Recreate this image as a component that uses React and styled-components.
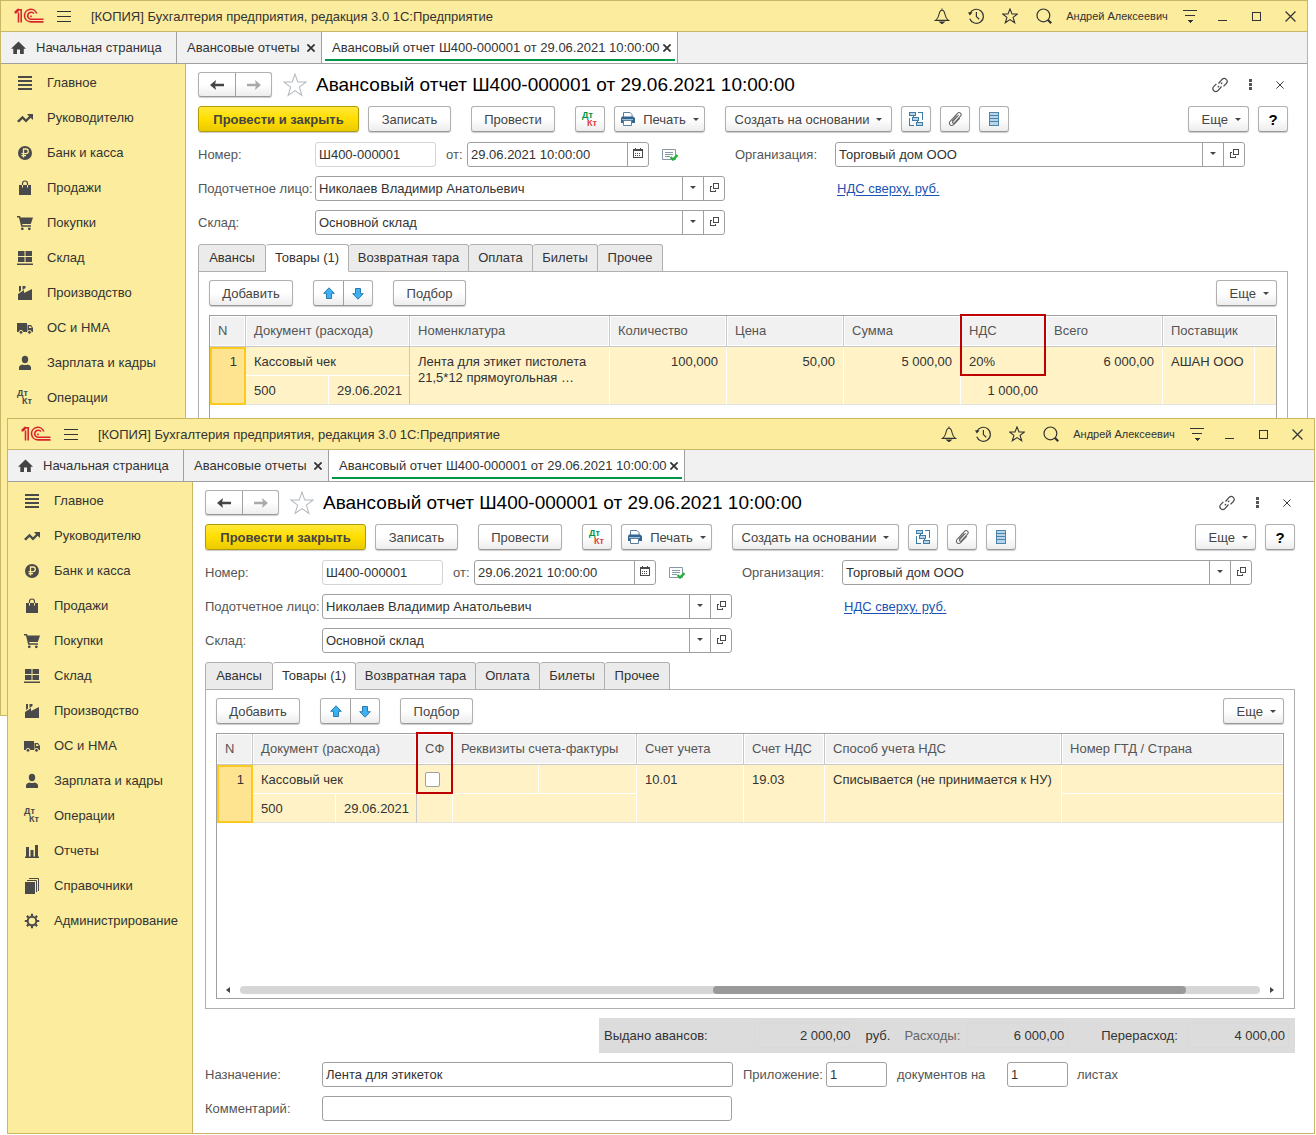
import { useId } from "react";
import styled, { createGlobalStyle, css } from "styled-components";

const GlobalStyle = createGlobalStyle`
  * {
    box-sizing: border-box;
  }

  body {
    margin: 0;
    background: #ffffff;
    font-family: "Liberation Sans", Arial, sans-serif;
    font-size: 13px;
    color: #333333;
  }

  button,
  input,
  select {
    font: inherit;
    color: inherit;
    margin: 0;
  }
`;

const Desktop = styled.main`
  position: relative;
  padding: 418px 1px 1px 7px;
`;

/* ---------- window frame ---------- */

const WindowFrame = styled.section`
  display: flex;
  flex-direction: column;
  min-height: 716px;
  background: #ffffff;
  border: 1px solid #c9b763;

  ${(p) =>
    p.$behind
      ? css`
          position: absolute;
          top: 0;
          left: 0;
          right: 8px;
        `
      : css`
          position: relative;
          z-index: 1;
        `}
`;

const TitleBar = styled.header`
  display: flex;
  align-items: center;
  height: 31px;
  padding-left: 13px;
  background: #fbec9e;
  border-bottom: 1px solid #c9b763;
`;

const AppTitle = styled.div`
  flex: 1;
  padding-left: 7px;
  white-space: nowrap;
`;

const BarButton = styled.button`
  display: flex;
  align-items: center;
  justify-content: center;
  width: ${(p) => p.$width || 34}px;
  height: 30px;
  padding: 0;
  border: 0;
  background: none;
`;

const UserName = styled.div`
  width: 112px;
  font-size: 11px;
  text-align: center;
  white-space: nowrap;
`;

const PageTabs = styled.nav`
  display: flex;
  height: 32px;
  background: #f1f1f1;
  border-bottom: 1px solid #a0a0a0;
`;

const PageTab = styled.div`
  display: flex;
  align-items: center;
  justify-content: space-between;
  width: ${(p) => p.$width}px;
  padding: 0 6px 0 10px;
  border-right: 1px solid #a0a0a0;
  white-space: nowrap;
  position: relative;
  background: ${(p) => (p.$active ? "#ffffff" : "transparent")};

  ${(p) =>
    p.$active &&
    css`
      &::after {
        content: "";
        position: absolute;
        left: 3px;
        right: 2px;
        bottom: 2px;
        height: 2px;
        background: #009646;
      }
    `}
`;

const HomeTab = styled(PageTab)`
  justify-content: flex-start;
  gap: 10px;
`;

const CloseTab = styled.button`
  display: flex;
  padding: 0;
  border: 0;
  background: none;
`;

const Body = styled.div`
  display: flex;
  flex: 1;
`;

const Sidebar = styled.nav`
  flex: none;
  width: 185px;
  padding-top: 1px;
  background: #fbec9e;
  border-right: 1px solid #c9b763;
`;

const MenuItem = styled.a`
  display: flex;
  align-items: center;
  gap: 13px;
  height: 35px;
  padding-left: 15px;
  color: #333333;
  text-decoration: none;
  white-space: nowrap;
`;

const Content = styled.div`
  display: flex;
  flex-direction: column;
  flex: 1;
  min-width: 0;
  padding: 8px 19px 12px 12px;
`;

/* ---------- document header ---------- */

const DocHeader = styled.div`
  display: flex;
  align-items: center;
  height: 25px;
`;

const ButtonPair = styled.div`
  display: flex;
  height: ${(p) => p.$height}px;
  border: 1px solid #b0b0b0;
  border-bottom-color: #989898;
  border-radius: 3px;
  box-shadow: 0 1px 1px #cccccc;
  background: linear-gradient(#ffffff 50%, #ededed);
`;

const PairButton = styled.button`
  display: flex;
  align-items: center;
  justify-content: center;
  width: ${(p) => p.$width}px;
  padding: 0;
  border: 0;
  background: none;

  & + & {
    border-left: 1px solid ${(p) => p.$divider || "#d4d4d4"};
  }
`;

const DocTitle = styled.h1`
  flex: 1;
  margin: 0;
  font-size: 19px;
  font-weight: 400;
  line-height: 24px;
  color: #000000;
  white-space: nowrap;
`;

const StarButton = styled(BarButton)`
  height: 24px;
  margin: 0 9px 0 10px;
`;

const HeaderTools = styled.div`
  display: flex;
  margin-right: -7px;
`;

/* ---------- commands ---------- */

const CommandBar = styled.div`
  display: flex;
  justify-content: space-between;
  margin-top: ${(p) => p.$top}px;
`;

const CommandGroup = styled.div`
  display: flex;
  gap: ${(p) => p.$gap}px;
`;

const Button = styled.button`
  display: flex;
  align-items: center;
  justify-content: center;
  gap: 7px;
  width: ${(p) => p.$width}px;
  height: 26px;
  padding: 0;
  border: 1px solid #b0b0b0;
  border-bottom-color: #989898;
  border-radius: 3px;
  box-shadow: 0 1px 1px #cccccc;
  background: linear-gradient(#ffffff 50%, #ededed);
  color: #444444;
  white-space: nowrap;
`;

const PrimaryButton = styled(Button)`
  border-color: #b19a0a;
  background: linear-gradient(#ffe838, #ffde00 50%, #ebca00);
  font-weight: 700;
`;

const MoreButton = styled(Button)`
  justify-content: flex-end;
  padding-right: 7px;
`;

const HelpButton = styled(Button)`
  color: #000000;
  font-size: 15px;
  font-weight: 700;
`;

/* ---------- form ---------- */

const Fields = styled.div`
  display: flex;
  flex-direction: column;
  gap: 9px;
  margin-top: ${(p) => p.$top}px;
`;

const FormRow = styled.div`
  display: flex;
  align-items: center;
  height: 25px;
`;

const Label = styled.label`
  flex: none;
  width: ${(p) => (p.$width ? `${p.$width}px` : "auto")};
  color: #555555;
  white-space: nowrap;
`;

const FieldBox = styled.div`
  position: relative;
  display: flex;
  flex: 0 1 ${(p) => p.$width}px;
  height: 25px;
  border: 1px solid ${(p) => (p.$readonly ? "#d4d4d4" : "#a0a0a0")};
  border-radius: 3px;
  overflow: hidden;
  background: #ffffff;

  input,
  select {
    flex: 1;
    width: 100%;
    min-width: 0;
    padding: 0 3px;
    border: 0;
    outline: 0;
    background: none;
    appearance: none;
  }
`;

const Caret = styled.span`
  position: absolute;
  top: 0;
  bottom: 0;
  right: 21px;
  display: flex;
  align-items: center;
  justify-content: center;
  width: 21px;
  padding-bottom: 2px;
  border-left: 1px solid #a0a0a0;
  pointer-events: none;
`;

const FieldButton = styled.button`
  display: flex;
  align-items: center;
  justify-content: center;
  flex: none;
  width: 21px;
  padding: 0 0 2px;
  border: 0;
  border-left: 1px solid #a0a0a0;
  background: none;
`;

const Spacer = styled.span`
  flex: none;
  width: ${(p) => p.$width}px;
`;

const TaxLink = styled.a`
  color: #1a53b5;
  text-underline-offset: 2px;
`;

/* ---------- section tabs ---------- */

const SectionTabs = styled.div`
  display: flex;
  height: 28px;
  margin: 9px 0 -1px;
  position: relative;
`;

const SectionTab = styled.button`
  width: ${(p) => p.$width}px;
  padding: 0 0 2px;
  border: 1px solid #b0b0b0;
  border-left-width: ${(p) => (p.$first ? 1 : 0)}px;
  border-bottom-color: ${(p) => (p.$active ? "#ffffff" : "#b0b0b0")};
  border-radius: 3px 3px 0 0;
  background: ${(p) => (p.$active ? "#ffffff" : "#ebebeb")};
  white-space: nowrap;
`;

const Panel = styled.div`
  display: flex;
  flex-direction: column;
  flex: 1;
  padding: 8px 10px 9px;
  border: 1px solid #b0b0b0;
`;

const GridBox = styled.div`
  display: flex;
  flex-direction: column;
  justify-content: space-between;
  flex: 1;
  min-height: 264px;
  margin-top: 9px;
  border: 1px solid #a0a0a0;
`;

const Table = styled.table`
  width: 100%;
  table-layout: fixed;
  border-collapse: separate;
  border-spacing: 0;
`;

const Th = styled.th`
  position: relative;
  height: 31px;
  padding: 0 8px 1px;
  border-right: 1px solid #c8c8c8;
  border-bottom: 1px solid #c8c8c8;
  box-shadow: inset 0 0 0 1px #ffffff;
  background: #f1f1f1;
  color: #555555;
  font-weight: 400;
  text-align: left;
  white-space: nowrap;

  &:last-child {
    border-right: 0;
  }

  ${(p) =>
    p.$marked &&
    css`
      &::after {
        content: "";
        position: absolute;
        z-index: 1;
        top: -2px;
        left: -1px;
        right: -1px;
        height: 58px;
        border: 2px solid #c00000;
      }
    `}
`;

const Td = styled.td`
  height: ${(p) => (p.rowSpan ? 58 : 29)}px;
  padding: 7px 8px 0;
  border-right: 1px solid ${(p) => (p.$edge ? "#c8c8c8" : "#ffffff")};
  border-bottom: 1px solid ${(p) => (p.$lower || p.rowSpan ? "#e2e2e2" : "#ffffff")};
  background: #fef2c6;
  line-height: 16px;
  text-align: ${(p) => (p.$right ? "right" : "left")};
  vertical-align: top;
  white-space: nowrap;

  &:last-child {
    border-right: 0;
  }
`;

const CurrentTd = styled(Td)`
  padding: 5px 7px 0;
  border: 2px solid #fbc91f;
  background: #fee391;
`;

const Tick = styled.input`
  display: block;
  appearance: none;
  width: 15px;
  height: 15px;
  border: 1px solid #a0a0a0;
  border-radius: 2px;
  background: #ffffff;
`;

const ScrollRow = styled.div`
  display: flex;
  align-items: center;
  gap: 8px;
  height: 16px;
  padding: 0 8px;
`;

const Track = styled.div`
  flex: 1;
  height: 8px;
  border-radius: 4px;
  background: #d6d6d6;
`;

const Thumb = styled.div`
  width: 46.3%;
  height: 8px;
  margin-left: 46.4%;
  border-radius: 4px;
  background: #999999;
`;

/* ---------- footer ---------- */

const Totals = styled.div`
  display: flex;
  align-items: center;
  align-self: flex-end;
  width: 696px;
  max-width: 100%;
  height: 35px;
  margin-top: 9px;
  padding: 0 6px 0 5px;
  background: #dcdcdc;
  white-space: nowrap;
`;

const TotalLabel = styled.label`
  width: ${(p) => p.$width}px;
  color: ${(p) => (p.$muted ? "#666666" : "#333333")};
`;

const TotalValue = styled.output`
  flex: none;
  width: 101px;
  height: 25px;
  padding-right: 3px;
  border: 1px solid #d9d9d9;
  border-radius: 3px;
  line-height: 23px;
  text-align: right;
`;

/* ---------- icons ---------- */

const Svg = ({ w = 16, h = 16, children, ...rest }) => (
  <svg
    width={w}
    height={h}
    viewBox={`0 0 ${w} ${h}`}
    fill="none"
    stroke="#4a4a4a"
    aria-hidden="true"
    {...rest}
  >
    {children}
  </svg>
);

const Logo = () => (
  <Svg w={30} h={16} stroke="#d9262c" strokeWidth="1.6">
    <path d="M.5 4.8H2L5.2 1.7H7.2V14.6M.8 4.3 4.6.9M4.5 4.6V14.6" />
    <path d="M22.8 5.6A6.3 6.3 0 1 0 16.8 13.9H29.5" />
    <path d="M20 5.6A3.5 3.5 0 1 0 16.8 11.2H29.5" />
    <path d="M17.8 8.4H16.2" />
  </Svg>
);

const Burger = () => (
  <Svg w={14} h={12} stroke="#333" shapeRendering="crispEdges">
    <path d="M0 1.5H14M0 6.5H14M0 11.5H14" />
  </Svg>
);

const Bell = () => (
  <Svg stroke="#333" strokeWidth="1.1">
    <path d="M8 .6V2M1.500 12.400H14.500C12 10.800 11.500 9 11 6.500 10.600 3.800 9.600 2.200 8 2.200S5.400 3.800 5 6.500C4.500 9 4 10.800 1.500 12.400z" />
    <path d="M6 14h4l-2 1.600z" fill="#333" />
  </Svg>
);

const History = () => (
  <Svg stroke="#333" strokeWidth="1.2">
    <path d="M1.9 5.6A7 7 0 1 1 1.8 10.7M8.4 4v4.6l2.8 2.6" />
    <path d="M0 4.2 4.6 4.5 1.8 7.6z" fill="#333" stroke="none" />
  </Svg>
);

const Star = () => (
  <Svg stroke="#333" strokeWidth="1.1">
    <path d="M8 .9 10 6h5.3l-4.2 3.4 1.600 5.400L8 11.600l-4.700 3.200 1.600-5.400L.7 6H6z" />
  </Svg>
);

const BigStar = () => (
  <svg width="24" height="24" viewBox="0 0 16 16" fill="none" stroke="#b4bac0" strokeWidth=".7" aria-hidden="true">
    <path d="M8 .7 9.8 6h5.600l-4.500 3.400 1.700 5.600L8 11.700 3.400 15l1.700-5.600L.6 6h5.600z" />
  </svg>
);

const Search = () => (
  <Svg stroke="#333" strokeWidth="1.2">
    <circle cx="7.4" cy="7.4" r="6.4" />
    <path d="m11.8 11.8 3.400 3.400" strokeWidth="2.2" />
  </Svg>
);

const Settings = () => (
  <Svg w={14} h={14} stroke="#333" shapeRendering="crispEdges">
    <path d="M0 1.5H14M2 6.5H12" />
    <path d="M4 11h6L7 14z" fill="#333" stroke="none" />
  </Svg>
);

const Minimize = () => (
  <Svg w={10} h={10} stroke="#333" shapeRendering="crispEdges">
    <path d="M0 9.5H9" />
  </Svg>
);

const Maximize = () => (
  <Svg w={10} h={10} stroke="#333" shapeRendering="crispEdges">
    <path d="M.5 1.5H8.500V9.500H.5z" />
  </Svg>
);

const Cross = ({ size = 10, width = 1.1 }) => (
  <svg width={size} height={size} viewBox="0 0 10 10" stroke="#333" strokeWidth={width} aria-hidden="true">
    <path d="M.5.5l9 9M9.5.5l-9 9" />
  </svg>
);

const Home = () => (
  <Svg w={15} h={14} fill="#444" stroke="none">
    <path d="M7.5.5 15 7.7h-2.200V13H9V8.500H6V13H2.300V7.700H0z" />
  </Svg>
);

const ArrowIcon = ({ color, flip }) => (
  <Svg w={14} h={10} fill={color} stroke="none" transform={flip ? "scale(-1 1)" : undefined}>
    <path d="M0 5 6 0 5.200 3.800H14V6.200H5.200L6 10z" />
  </Svg>
);

const BlueArrow = ({ flip }) => (
  <Svg w={12} h={13} fill="#3cb0f0" stroke="#2b7bb0" transform={flip ? "scale(1 -1)" : undefined}>
    <path d="M6 .8 11.3 6.3H8.500V11.500H3.500V6.300H.7z" />
  </Svg>
);

const Down = () => (
  <Svg w={6} h={3} fill="#444" stroke="none">
    <path d="M0 0H6L3 3z" />
  </Svg>
);

const OpenIcon = () => (
  <Svg w={9} h={9} shapeRendering="crispEdges">
    <path d="M3.5.5H8.500V5.500H3.500zM2 3.500H.5V8.500H5.500V7" />
  </Svg>
);

const CalendarIcon = () => (
  <Svg w={10} h={11} shapeRendering="crispEdges">
    <path d="M.5 1.5H9.500V9.500H.5zM0 2.500H10M2.500 0V2M7.500 0V2" />
    <path d="M2 5.5H8M2 7.500H8" strokeDasharray="1 1" />
  </Svg>
);

const LinkIcon = () => (
  <Svg strokeWidth="1.2">
    <path d="M6.5 6.5 10.300 2.200C12.800-.2 17 3.600 14.300 6.500L11.500 9.300M9.500 9.500 5.800 13.800C3 16.200-.8 12.400 1.700 9.600L4.400 6.800M5.800 10.300 7 9M9 7 10.300 5.700" />
  </Svg>
);

const Dots = () => (
  <Svg w={3} h={12} fill="#555" stroke="none">
    <path d="M0 0H3V3H0zM0 4H3V7H0zM0 8H3V11H0z" />
  </Svg>
);

const PostedIcon = () => (
  <Svg w={16} h={13}>
    <path d="M.5 1.5H13.500V11.500H.5z" stroke="#8798a8" />
    <path d="M3 4.5H11M3 6.500H11M3 8.500H8" stroke="#8798a8" />
    <path d="m8.5 9 2.500 2.500L15.500 7" stroke="#27b13b" strokeWidth="2.4" />
  </Svg>
);

const PrinterIcon = () => (
  <Svg w={16} h={16}>
    <path d="M3.5 6V1.500H10L12 3.500V6" stroke="#5c7f9e" fill="#fff" />
    <path d="M2 5.5H13L15 7V12H1V7z" fill="#33658f" stroke="none" />
    <path d="M3.5 9.500H11.500V14.500H3.500z" fill="#fff" stroke="#5c7f9e" />
    <path d="M2 8.5H13" stroke="#9fc0da" />
  </Svg>
);

const StructureIcon = () => (
  <Svg w={16} h={16} stroke="#3f7ba5" shapeRendering="crispEdges">
    <path d="M1.5 1.500H7.500V4.500H1.500zM4.500 6.500H10.500V9.500H4.500zM8.500 11.500H14.500V14.500H8.500z" fill="#b9d4e8" />
    <path d="M10 1.5H14.500V9M1.500 7V14.500H5.500M5.500 4.500V6.500M9.500 9.500V11.500" />
  </Svg>
);

const ClipIcon = () => (
  <Svg strokeWidth="1.1" stroke="#666">
    <path d="M11.7 4 5.900 10.400C4.800 11.700 6.300 13 7.400 11.800L13.500 5.200C15.500 2.900 12.500.3 10.500 2.300L3.400 10C.8 13 4.300 16 6.900 13.400L12.800 7.200" />
    <path d="M9.9 4.500 4.700 10.200" />
  </Svg>
);

const ListIcon = () => (
  <Svg w={12} h={16} stroke="#4a83ab" shapeRendering="crispEdges">
    <path d="M1.5 1.500H10.500V14.500H1.500z" fill="#b9d4e8" />
    <path d="M1 4.5H11M1 7.500H11M1 10.500H11" />
  </Svg>
);

const DtKt = ({ top = "#4a4a4a", bottom = "#4a4a4a" }) => (
  <Svg w={18} h={17} stroke="none" fontFamily="Liberation Sans, sans-serif" fontSize="9" fontWeight="700">
    <text x="1" y="7" fill={top}>Дт</text>
    <text x="6" y="15" fill={bottom}>Кт</text>
  </Svg>
);

const MenuIcon = ({ name }) => {
  if (name === "ops") return <DtKt />;
  return (
    <Svg w={18} h={16} fill="#4a4a4a" stroke="none">
      {name === "main" && <path d="M2 1H16V3H2zM2 5H16V7H2zM2 9H16V11H2zM2 13H16V15H2z" />}
      {name === "chief" && (
        <path d="M1 11 6.500 5.800 10 9.300 13 6.200 11 4H17V10L14.700 7.800 10 12.500 6.500 9 3 12.600z" />
      )}
      {name === "bank" && (
        <>
          <circle cx="9" cy="8" r="7" />
          <path d="M7.5 12.500V4H10A2.200 2.200 0 0 1 10 8.600H5.500M5.500 10.600H10" stroke="#fbec9e" strokeWidth="1.3" fill="none" />
        </>
      )}
      {name === "sales" && (
        <>
          <path d="M3 5H15V15H3z" />
          <path d="M6.5 7V3.500A2.500 2.500 0 0 1 11.500 3.500V7" stroke="#4a4a4a" strokeWidth="1.2" fill="none" />
          <path d="M6 5H7V7.500H6zM11 5H12V7.500H11z" fill="#fbec9e" />
        </>
      )}
      {name === "buy" && (
        <>
          <path d="M1 1H4L4.600 2.500H17L14.800 9H6.200L6.500 10.300H15V11.800H5.200L3 2.500H1z" />
          <circle cx="6.3" cy="13.8" r="1.4" />
          <circle cx="13.3" cy="13.8" r="1.4" />
        </>
      )}
      {name === "stock" && <path d="M2 1H8.500V6H2zM9.500 1H16V6H9.500zM2 7H8.500V12H2zM9.500 7H16V12H9.500zM1 13.500H17V15H1z" />}
      {name === "factory" && <path d="M2 15V9L8 5V8L16 4V15zM3 1H5V5.500L3 7zM6.500 1H9.500V3L6.500 5z" />}
      {name === "truck" && (
        <>
          <path d="M1 3H11V12H1zM11.500 5H15L17 8V12H11.500z" />
          <path d="M13 6.2H14.600L15.800 8H13z" fill="#fbec9e" />
          <circle cx="5" cy="12.3" r="1.9" stroke="#fbec9e" />
          <circle cx="13.5" cy="12.3" r="1.9" stroke="#fbec9e" />
        </>
      )}
      {name === "person" && (
        <>
          <ellipse cx="9" cy="4.5" rx="3.2" ry="3.7" />
          <path d="M3 15V12.500Q3 10.500 6.500 9.500Q9 10.500 11.500 9.500Q15 10.500 15 12.500V15z" />
        </>
      )}
      {name === "reports" && <path d="M2 13.500H16V15H2zM3 4H6V13.500H3zM7.500 7H10.500V13.500H7.500zM12 2H15V13.500H12z" />}
      {name === "books" && (
        <>
          <path d="M2 4H12V16H2z" />
          <path d="M4 2.500H13.500V14M6 .5H15.500V13" stroke="#4a4a4a" fill="none" />
        </>
      )}
      {name === "gear" && (
        <>
          <circle cx="9" cy="8" r="4.3" fill="none" stroke="#4a4a4a" strokeWidth="2" />
          <path
            d="M9 .8V3M9 13V15.200M1.800 8H4M14 8H16.200M3.900 2.900 5.500 4.500M12.500 11.500 14.100 13.100M14.100 2.900 12.500 4.500M5.500 11.500 3.900 13.100"
            stroke="#4a4a4a"
            strokeWidth="2.2"
          />
        </>
      )}
    </Svg>
  );
};

/* ---------- data ---------- */

const menu = [
  ["main", "Главное"],
  ["chief", "Руководителю"],
  ["bank", "Банк и касса"],
  ["sales", "Продажи"],
  ["buy", "Покупки"],
  ["stock", "Склад"],
  ["factory", "Производство"],
  ["truck", "ОС и НМА"],
  ["person", "Зарплата и кадры"],
  ["ops", "Операции"],
  ["reports", "Отчеты"],
  ["books", "Справочники"],
  ["gear", "Администрирование"],
];

const sections = [
  ["Авансы", 68],
  ["Товары (1)", 83],
  ["Возвратная тара", 120],
  ["Оплата", 64],
  ["Билеты", 65],
  ["Прочее", 65],
];

/* ---------- parts ---------- */

function SelectField({ id, value, width }) {
  return (
    <FieldBox $width={width}>
      <select id={id} defaultValue={value}>
        <option>{value}</option>
      </select>
      <Caret>
        <Down />
      </Caret>
      <FieldButton aria-label="Открыть">
        <OpenIcon />
      </FieldButton>
    </FieldBox>
  );
}

function Columns({ widths }) {
  return (
    <colgroup>
      {widths.map((w, i) => (
        <col key={i} width={w || undefined} />
      ))}
    </colgroup>
  );
}

function AmountsTable() {
  return (
    <Table>
      <Columns widths={[36, 83, 81, 200, 117, 117, 117, 85, 117, 92, 0]} />
      <thead>
        <tr>
          <Th>N</Th>
          <Th colSpan={2}>Документ (расхода)</Th>
          <Th>Номенклатура</Th>
          <Th>Количество</Th>
          <Th>Цена</Th>
          <Th>Сумма</Th>
          <Th $marked>НДС</Th>
          <Th>Всего</Th>
          <Th colSpan={2}>Поставщик</Th>
        </tr>
      </thead>
      <tbody>
        <tr>
          <CurrentTd rowSpan={2} $right>1</CurrentTd>
          <Td colSpan={2} $edge>Кассовый чек</Td>
          <Td rowSpan={2}>
            Лента для этикет пистолета
            <br />
            21,5*12 прямоугольная …
          </Td>
          <Td rowSpan={2} $right>100,000</Td>
          <Td rowSpan={2} $right>50,00</Td>
          <Td rowSpan={2} $right>5 000,00</Td>
          <Td>20%</Td>
          <Td rowSpan={2} $right>6 000,00</Td>
          <Td rowSpan={2}>АШАН ООО</Td>
          <Td rowSpan={2} />
        </tr>
        <tr>
          <Td $lower>500</Td>
          <Td $lower $edge $right>29.06.2021</Td>
          <Td $lower $right>1 000,00</Td>
        </tr>
      </tbody>
    </Table>
  );
}

function AccountsTable() {
  return (
    <Table>
      <Columns widths={[36, 83, 81, 36, 86, 98, 107, 81, 237, 0]} />
      <thead>
        <tr>
          <Th>N</Th>
          <Th colSpan={2}>Документ (расхода)</Th>
          <Th $marked>СФ</Th>
          <Th colSpan={2}>Реквизиты счета-фактуры</Th>
          <Th>Счет учета</Th>
          <Th>Счет НДС</Th>
          <Th>Способ учета НДС</Th>
          <Th>Номер ГТД / Страна</Th>
        </tr>
      </thead>
      <tbody>
        <tr>
          <CurrentTd rowSpan={2} $right>1</CurrentTd>
          <Td colSpan={2} $edge>Кассовый чек</Td>
          <Td>
            <Tick type="checkbox" aria-label="СФ" />
          </Td>
          <Td />
          <Td />
          <Td rowSpan={2}>10.01</Td>
          <Td rowSpan={2}>19.03</Td>
          <Td rowSpan={2}>Списывается (не принимается к НУ)</Td>
          <Td />
        </tr>
        <tr>
          <Td $lower>500</Td>
          <Td $lower $edge $right>29.06.2021</Td>
          <Td $lower />
          <Td $lower colSpan={2} />
          <Td $lower />
        </tr>
      </tbody>
    </Table>
  );
}

function DocumentFooter({ id }) {
  return (
    <>
      <Totals>
        <TotalLabel htmlFor={`${id}-issued`} $width={150}>Выдано авансов:</TotalLabel>
        <TotalValue id={`${id}-issued`}>2 000,00</TotalValue>
        <Spacer $width={11} />
        <TotalLabel as="span" $width={39}>руб.</TotalLabel>
        <TotalLabel htmlFor={`${id}-spent`} $width={63} $muted>Расходы:</TotalLabel>
        <TotalValue id={`${id}-spent`}>6 000,00</TotalValue>
        <Spacer $width={33} />
        <TotalLabel htmlFor={`${id}-over`} $width={87}>Перерасход:</TotalLabel>
        <TotalValue id={`${id}-over`}>4 000,00</TotalValue>
      </Totals>
      <Fields $top={9}>
        <FormRow>
          <Label htmlFor={`${id}-purpose`} $width={117}>Назначение:</Label>
          <FieldBox $width={411}>
            <input id={`${id}-purpose`} defaultValue="Лента для этикеток" />
          </FieldBox>
          <Spacer $width={10} />
          <Label htmlFor={`${id}-docs`} $width={83}>Приложение:</Label>
          <FieldBox $width={61}>
            <input id={`${id}-docs`} defaultValue="1" />
          </FieldBox>
          <Spacer $width={10} />
          <Label htmlFor={`${id}-sheets`} $width={110}>документов на</Label>
          <FieldBox $width={61}>
            <input id={`${id}-sheets`} defaultValue="1" />
          </FieldBox>
          <Spacer $width={9} />
          <Label as="span">листах</Label>
        </FormRow>
        <FormRow>
          <Label htmlFor={`${id}-comment`} $width={117}>Комментарий:</Label>
          <FieldBox $width={410}>
            <input id={`${id}-comment`} />
          </FieldBox>
        </FormRow>
      </Fields>
    </>
  );
}

function ReportWindow({ behind, items, table, children }) {
  const id = useId();

  return (
    <WindowFrame $behind={behind}>
      <TitleBar>
        <Logo />
        <BarButton $width={40} aria-label="Меню"><Burger /></BarButton>
        <AppTitle>[КОПИЯ] Бухгалтерия предприятия, редакция 3.0 1С:Предприятие</AppTitle>
        <BarButton aria-label="Уведомления"><Bell /></BarButton>
        <BarButton aria-label="История"><History /></BarButton>
        <BarButton aria-label="Избранное"><Star /></BarButton>
        <BarButton aria-label="Поиск"><Search /></BarButton>
        <UserName>Андрей Алексеевич</UserName>
        <BarButton $width={33} aria-label="Настройки"><Settings /></BarButton>
        <BarButton $width={34} aria-label="Свернуть"><Minimize /></BarButton>
        <BarButton $width={34} aria-label="Развернуть"><Maximize /></BarButton>
        <BarButton $width={33} aria-label="Закрыть"><Cross size={11} /></BarButton>
      </TitleBar>

      <PageTabs>
        <HomeTab $width={176}>
          <Home />
          Начальная страница
        </HomeTab>
        <PageTab $width={145}>
          Авансовые отчеты
          <CloseTab aria-label="Закрыть вкладку"><Cross size={8} width={2.2} /></CloseTab>
        </PageTab>
        <PageTab $width={356} $active>
          Авансовый отчет Ш400-000001 от 29.06.2021 10:00:00
          <CloseTab aria-label="Закрыть вкладку"><Cross size={8} width={2.2} /></CloseTab>
        </PageTab>
      </PageTabs>

      <Body>
        <Sidebar>
          {items.map(([icon, text]) => (
            <MenuItem key={icon} href="#">
              <MenuIcon name={icon} />
              {text}
            </MenuItem>
          ))}
        </Sidebar>

        <Content>
          <DocHeader>
            <ButtonPair $height={25}>
              <PairButton $width={36} aria-label="Назад"><ArrowIcon color="#444" /></PairButton>
              <PairButton $width={36} aria-label="Вперед"><ArrowIcon color="#aaa" flip /></PairButton>
            </ButtonPair>
            <StarButton $width={25} aria-label="В избранное"><BigStar /></StarButton>
            <DocTitle>Авансовый отчет Ш400-000001 от 29.06.2021 10:00:00</DocTitle>
            <HeaderTools>
              <BarButton $width={30} aria-label="Ссылка"><LinkIcon /></BarButton>
              <BarButton $width={30} aria-label="Действия"><Dots /></BarButton>
              <BarButton $width={30} aria-label="Закрыть документ"><Cross size={8} width={1.2} /></BarButton>
            </HeaderTools>
          </DocHeader>

          <CommandBar $top={9}>
            <CommandGroup $gap={20}>
              <CommandGroup $gap={9}>
                <PrimaryButton $width={161}>Провести и закрыть</PrimaryButton>
                <Button $width={83}>Записать</Button>
              </CommandGroup>
              <Button $width={84}>Провести</Button>
              <CommandGroup $gap={9}>
                <Button $width={30} aria-label="Проводки"><DtKt top="#00923f" bottom="#e0403a" /></Button>
                <Button $width={91}><PrinterIcon />Печать<Down /></Button>
              </CommandGroup>
              <CommandGroup $gap={9}>
                <Button $width={167}>Создать на основании<Down /></Button>
                <Button $width={30} aria-label="Структура"><StructureIcon /></Button>
                <Button $width={30} aria-label="Файлы"><ClipIcon /></Button>
                <Button $width={30} aria-label="Реестр"><ListIcon /></Button>
              </CommandGroup>
            </CommandGroup>
            <CommandGroup $gap={9}>
              <MoreButton $width={61}>Еще<Down /></MoreButton>
              <HelpButton $width={30}>?</HelpButton>
            </CommandGroup>
          </CommandBar>

          <Fields $top={10}>
            <FormRow>
              <Label htmlFor={`${id}-number`} $width={117}>Номер:</Label>
              <FieldBox $width={121} $readonly>
                <input id={`${id}-number`} defaultValue="Ш400-000001" readOnly />
              </FieldBox>
              <Spacer $width={10} />
              <Label htmlFor={`${id}-date`} $width={21}>от:</Label>
              <FieldBox $width={182}>
                <input id={`${id}-date`} defaultValue="29.06.2021 10:00:00" />
                <FieldButton aria-label="Календарь"><CalendarIcon /></FieldButton>
              </FieldBox>
              <Spacer $width={13} />
              <PostedIcon />
              <Spacer $width={57} />
              <Label htmlFor={`${id}-org`} $width={100}>Организация:</Label>
              <SelectField id={`${id}-org`} value="Торговый дом ООО" width={410} />
            </FormRow>

            <FormRow>
              <Label htmlFor={`${id}-person`} $width={117}>Подотчетное лицо:</Label>
              <SelectField id={`${id}-person`} value="Николаев Владимир Анатольевич" width={410} />
              <Spacer $width={112} />
              <TaxLink href="#">НДС сверху, руб.</TaxLink>
            </FormRow>

            <FormRow>
              <Label htmlFor={`${id}-store`} $width={117}>Склад:</Label>
              <SelectField id={`${id}-store`} value="Основной склад" width={410} />
            </FormRow>
          </Fields>

          <SectionTabs role="tablist">
            {sections.map(([text, width], i) => (
              <SectionTab key={text} role="tab" $width={width} $first={i === 0} $active={i === 1}>
                {text}
              </SectionTab>
            ))}
          </SectionTabs>

          <Panel>
            <CommandBar $top={0}>
              <CommandGroup $gap={20}>
                <Button $width={84}>Добавить</Button>
                <ButtonPair $height={26}>
                  <PairButton $width={29} aria-label="Вверх"><BlueArrow /></PairButton>
                  <PairButton $width={29} $divider="#a0a0a0" aria-label="Вниз"><BlueArrow flip /></PairButton>
                </ButtonPair>
                <Button $width={73}>Подбор</Button>
              </CommandGroup>
              <MoreButton $width={61}>Еще<Down /></MoreButton>
            </CommandBar>
            <GridBox>
              {table}
              {!behind && (
                <ScrollRow>
                  <Svg w={7} h={6} fill="#444" stroke="none"><path d="M5 0V6L1 3z" /></Svg>
                  <Track><Thumb /></Track>
                  <Svg w={7} h={6} fill="#444" stroke="none"><path d="M2 0V6L6 3z" /></Svg>
                </ScrollRow>
              )}
            </GridBox>
          </Panel>
          {children && children(id)}
        </Content>
      </Body>
    </WindowFrame>
  );
}

function App() {
  return (
    <>
      <GlobalStyle />
      <Desktop>
        <ReportWindow behind items={menu.slice(0, 10)} table={<AmountsTable />} />
        <ReportWindow items={menu} table={<AccountsTable />}>
          {(id) => <DocumentFooter id={id} />}
        </ReportWindow>
      </Desktop>
    </>
  );
}

export default App;
